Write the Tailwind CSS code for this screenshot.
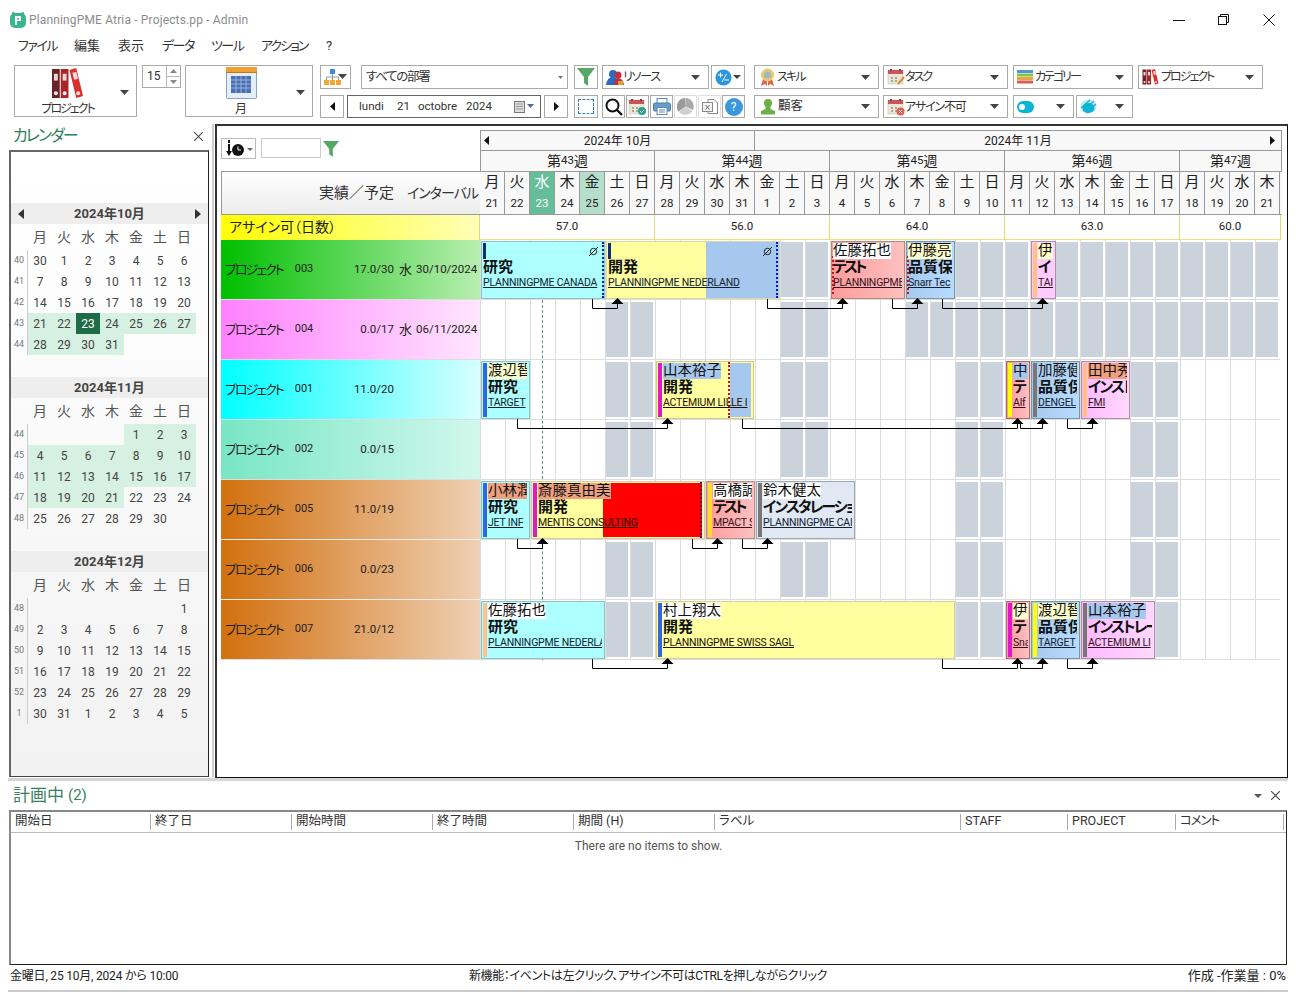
<!DOCTYPE html>
<html lang="ja">
<head>
<meta charset="utf-8">
<script src="https://cdn.jsdelivr.net/npm/@tailwindcss/browser@4"></script>
<title>PlanningPME Atria</title>
</head>
<body class="bg-white">
<svg width="0" height="0" class="absolute">
  <defs>
    <path id="arr" d="M-6 6L0 0L6 6Z" fill="#000"/>
    <g id="binders">
      <rect x="0" y="1" width="8" height="30" fill="#6b2226"/><rect x="9" y="1" width="8" height="30" fill="#ab2628"/>
      <path d="M18 2L25 0L32 29L25 31Z" fill="#d8302e"/>
      <rect x="2" y="6" width="4" height="7" fill="#e8d8d8"/><rect x="11" y="6" width="4" height="7" fill="#f0d8d8"/><path d="M21 5L25 4L27 11L23 12Z" fill="#f4dede"/>
      <circle cx="4" cy="26" r="2" fill="#eee"/><circle cx="13" cy="26" r="2" fill="#eee"/><circle cx="27" cy="26" r="2" fill="#f4dede"/>
    </g>
    <g id="calsm">
      <rect x="1" y="2" width="15" height="14" fill="#e9e6d8" stroke="#c9c6b8" stroke-width=".6"/>
      <rect x="1" y="2" width="15" height="4" fill="#c9555a"/>
      <rect x="3" y="1" width="2" height="2" fill="#555"/><rect x="12" y="1" width="2" height="2" fill="#555"/>
      <rect x="4" y="9" width="2" height="2" fill="#a8a590"/><rect x="8" y="9" width="2" height="2" fill="#a8a590"/><rect x="4" y="12" width="2" height="2" fill="#a8a590"/><rect x="8" y="12" width="2" height="2" fill="#a8a590"/>
    </g>
    <path id="caret" d="M0 0H9L4.5 5Z" fill="#444"/>
    <path id="funnel" d="M0 0H18L11 9V18L7 15V9Z" fill="#55a868"/>
  </defs>
</svg>
<div class="relative w-[1296px] h-[992px] overflow-hidden bg-white flex flex-col text-[#222] font-['Roboto','Noto_Sans_CJK_JP',sans-serif] [font-feature-settings:'palt']">

  <!-- title bar -->
  <div class="h-[36px] flex items-center shrink-0 pl-[10px] pt-[3px]">
    <svg width="16" height="17" viewBox="0 0 16 17"><circle cx="3.5" cy="2.5" r="1.5" fill="#2f9e78"/><circle cx="12.5" cy="2.5" r="1.5" fill="#2f9e78"/><rect x="0" y="2" width="16" height="15" rx="5" fill="#3bb58d"/><path d="M5 5H11V10H7V14H5Z M7 7V8.4H9V7Z" fill="#fff" fill-rule="evenodd"/></svg>
    <span class="ml-[3px] text-[12px] text-[#8c8c8c] tracking-[0.15px]">PlanningPME Atria - Projects.pp - Admin</span>
    <div class="ml-auto flex items-center gap-[33px] pr-[21px]">
      <svg width="12" height="12" viewBox="0 0 12 12"><path d="M0 6.5H12" stroke="#111"/></svg>
      <svg width="12" height="12" viewBox="0 0 12 12" fill="none" stroke="#111"><path d="M2.5 2.5V.5H10.5V8.5H8.5"/><rect x=".5" y="2.5" width="8" height="8" fill="#fff"/></svg>
      <svg width="12" height="12" viewBox="0 0 12 12" stroke="#111"><path d="M.5 .5L11.5 11.5M11.5 .5L.5 11.5"/></svg>
    </div>
  </div>

  <!-- menu -->
  <div class="h-[20px] shrink-0 flex items-center pl-[18px] text-[13px] text-[#333]">
    <span class="w-[56px] tracking-[-1.5px]">ファイル</span><span class="w-[44px]">編集</span><span class="w-[44px]">表示</span><span class="w-[49px] tracking-[-1.5px]">データ</span><span class="w-[50px] tracking-[-1.5px]">ツール</span><span class="w-[65px] tracking-[-2px]">アクション</span><span>?</span>
  </div>

  <!-- toolbar -->
  <div class="h-[64px] shrink-0 pt-[9px] pl-[14px] flex items-start text-[12px] text-[#333]">
    <div class="relative w-[123px] h-[52px] border border-[#aaa] flex flex-col items-center">
      <svg class="mt-[2px] mr-[16px]" width="33" height="32" viewBox="0 0 32 32"><use href="#binders"/></svg>
      <span class="mr-[16px] leading-[14px] mt-[3px] tracking-[-2px]">プロジェクト</span>
      <svg class="absolute right-[7px] top-[24px]" width="9" height="5"><use href="#caret"/></svg>
    </div>
    <div class="ml-[5px] w-[39px] h-[23px] border border-[#aaa] flex">
      <span class="w-[23px] pl-[4px] leading-[21px] text-[12px]">15</span>
      <div class="flex-1 border-l border-[#bbb] flex flex-col">
        <div class="h-[11px] border-b border-[#bbb] flex items-center justify-center"><svg width="7" height="4"><path d="M0 4H7L3.5 0Z" fill="#888"/></svg></div>
        <div class="flex-1 flex items-center justify-center"><svg width="7" height="4"><path d="M0 0H7L3.5 4Z" fill="#888"/></svg></div>
      </div>
    </div>
    <div class="relative ml-[4px] w-[128px] h-[52px] border border-[#aaa] flex flex-col items-center">
      <svg class="mr-[16px] mt-[1px]" width="31" height="32" viewBox="0 0 31 32"><rect x=".5" y=".5" width="30" height="31" rx="1" fill="#e4eef8" stroke="#7fa8c8"/><rect x="0" y="0" width="31" height="5" fill="#f0a030"/><rect x="0" y="5" width="31" height="1" fill="#c07820"/><rect x="5" y="9" width="20" height="17" fill="#4a6fb5"/><path d="M5 13H25M5 17H25M5 21H25M10 9V26M15 9V26M20 9V26" stroke="#b8cbe6" stroke-width=".7"/></svg>
      <span class="mr-[16px] leading-[14px] mt-[3px]">月</span>
      <svg class="absolute right-[7px] top-[24px]" width="9" height="5"><use href="#caret"/></svg>
    </div>
    <!-- dept / date -->
    <div class="ml-[7px] w-[248px] flex flex-col gap-[6px]">
      <div class="flex h-[24px]">
        <div class="w-[31px] border border-[#aaa] flex items-center justify-center">
          <svg width="24" height="17" viewBox="0 0 24 17"><rect x="6" y="0" width="5" height="5" fill="#3b8fd8"/><path d="M8.5 5V8M2.5 11V8H14.5V11M8.5 8V11" stroke="#999" fill="none"/><rect x="0" y="11" width="5" height="5" fill="#f0a830"/><rect x="6" y="11" width="5" height="5" fill="#f0a830"/><rect x="12" y="11" width="5" height="5" fill="#f0a830"/><path d="M14 5H23L18.5 10Z" fill="#444"/></svg>
        </div>
        <div class="ml-[10px] w-[207px] border border-[#aaa] flex items-center pl-[4px] text-[12.5px] tracking-[-1.3px]">すべての部署<svg class="ml-auto mr-[4px]" width="5" height="3"><path d="M0 0H5L2.5 3Z" fill="#777"/></svg></div>
      </div>
      <div class="flex h-[23px]">
        <div class="w-[24px] border border-[#aaa] flex items-center justify-center"><svg width="5" height="9"><path d="M5 0V9L0 4.5Z" fill="#111"/></svg></div>
        <div class="ml-[3px] w-[194px] border border-[#666] flex items-center text-[11.5px] pl-[11px]">
          <span class="w-[38px]">lundi</span><span class="w-[21px]">21</span><span class="w-[48px]">octobre</span><span class="w-[48px]">2024</span>
          <svg width="21" height="12" viewBox="0 0 21 12"><rect x=".5" y=".5" width="10" height="11" fill="#ddd" stroke="#777"/><path d="M2 3H9M2 5.5H9M2 8H9" stroke="#999"/><path d="M13 3H20L16.5 7Z" fill="#4a6a9a"/></svg>
        </div>
        <div class="ml-[3px] w-[24px] border border-[#aaa] flex items-center justify-center"><svg width="5" height="9"><path d="M0 0V9L5 4.5Z" fill="#111"/></svg></div>
      </div>
    </div>
    <div class="ml-[6px] w-[24px] flex flex-col gap-[6px]">
      <div class="h-[24px] border border-[#aaa] flex items-center justify-center"><svg width="18" height="18"><use href="#funnel"/></svg></div>
      <div class="h-[23px] border border-[#aaa] flex items-center justify-center"><div class="w-[16px] h-[15px] border border-dashed border-[#3a7fc0]"></div></div>
    </div>
    <!-- resource -->
    <div class="ml-[4px] w-[143px] flex flex-col gap-[6px]">
      <div class="flex h-[24px]">
        <div class="w-[107px] border border-[#aaa] flex items-center pl-[3px]">
          <svg width="19" height="17" viewBox="0 0 19 17"><circle cx="7" cy="5" r="4" fill="#2a6cc0"/><path d="M0 16Q1 8 7 8Q13 8 14 16Z" fill="#2a6cc0"/><circle cx="12" cy="6" r="3.5" fill="#c03040"/><path d="M8 16Q9 9 12 9Q17 9 18 16Z" fill="#c03040"/><rect x="12" y="12" width="5" height="4" fill="#e0a030"/></svg>
          <span class="ml-[-2px] tracking-[-1.2px]">リソース</span>
          <svg class="ml-auto mr-[8px]" width="9" height="5"><use href="#caret"/></svg>
        </div>
        <div class="ml-[2px] w-[34px] border border-[#aaa] flex items-center pl-[3px]">
          <svg width="27" height="17" viewBox="0 0 27 17"><circle cx="8.5" cy="8.5" r="8" fill="#2a95e0"/><path d="M3 6H8M5.5 3.5V8.5M7 13L11.5 5M9.5 11H14" stroke="#fff" fill="none"/><path d="M18 6H26L22 10Z" fill="#444"/></svg>
        </div>
      </div>
      <div class="flex h-[23px] justify-between">
        <div class="w-[23px] border border-[#aaa] flex items-center justify-center"><svg width="18" height="18" viewBox="0 0 18 18" fill="none" stroke="#111" stroke-width="2"><circle cx="7.5" cy="7.5" r="6"/><path d="M12 12L17 17" stroke-width="2.4"/></svg></div>
        <div class="w-[23px] border border-[#aaa] flex items-center justify-center"><svg width="19" height="18" viewBox="0 0 19 18"><use href="#calsm"/><circle cx="14" cy="13" r="4" fill="#2aa090"/><path d="M12 13L13.5 14.5L16 12" stroke="#fff" fill="none"/></svg></div>
        <div class="w-[23px] border border-[#aaa] flex items-center justify-center"><svg width="18" height="17" viewBox="0 0 18 17"><rect x="4" y="0.5" width="10" height="5" fill="#fff" stroke="#5a8ab8"/><rect x=".5" y="5" width="17" height="8" rx="1.5" fill="#6a9ccb" stroke="#4a7aa8"/><rect x="4" y="9.5" width="10" height="7" fill="#fff" stroke="#5a8ab8"/><path d="M6 12H12M6 14H12" stroke="#5a8ab8"/></svg></div>
        <div class="w-[23px] border border-[#ddd] flex items-center justify-center"><svg width="17" height="17" viewBox="0 0 17 17"><path d="M8.5 8.5V0A8.5 8.5 0 0 1 16 12Z" fill="#aaa"/><path d="M8.5 8.5L15.5 13A8.5 8.5 0 0 1 2 14Z" fill="#d0d0d0"/><path d="M8.5 8.5L1.5 13.5A8.5 8.5 0 0 1 8 0Z" fill="#999"/></svg></div>
        <div class="w-[23px] border border-[#ddd] flex items-center justify-center"><svg width="18" height="17" viewBox="0 0 18 17" fill="#fff" stroke="#888"><path d="M7 1.5H13L16.5 5V15.5H7Z"/><rect x="1.5" y="4.5" width="10" height="9" fill="#f2f2f2"/><path d="M4.5 7L8.5 11.5M8.5 7L4.5 11.5" stroke="#666"/></svg></div>
        <div class="w-[23px] border border-[#aaa] flex items-center justify-center"><div class="w-[18px] h-[18px] rounded-full bg-[#3c97d8] text-white text-[12px] leading-[18px] text-center">?</div></div>
      </div>
    </div>
    <!-- skill -->
    <div class="ml-[9px] w-[125px] flex flex-col gap-[6px]">
      <div class="h-[24px] border border-[#aaa] flex items-center pl-[5px]">
        <svg width="15" height="19" viewBox="0 0 15 19"><path d="M3 11L1 18L5 16L7 18V11M12 11L14 18L10 16L8 18V11Z" fill="#d8664a"/><circle cx="7.5" cy="7" r="6.5" fill="#e8c870"/><circle cx="7.5" cy="7" r="3.5" fill="#9ab8c8"/></svg>
        <span class="ml-[2px] tracking-[-1.8px]">スキル</span><svg class="ml-auto mr-[8px]" width="9" height="5"><use href="#caret"/></svg>
      </div>
      <div class="h-[23px] border border-[#aaa] flex items-center pl-[5px] text-[12.5px]">
        <svg width="16" height="17" viewBox="0 0 16 17"><circle cx="8" cy="5" r="4" fill="#6cae4a"/><path d="M5.5 8V11L1 13V16.5H15V13L10.5 11V8Z" fill="#6cae4a"/></svg>
        <span class="ml-[2px]">顧客</span><svg class="ml-auto mr-[8px]" width="9" height="5"><use href="#caret"/></svg>
      </div>
    </div>
    <!-- task -->
    <div class="ml-[4px] w-[125px] flex flex-col gap-[6px]">
      <div class="h-[24px] border border-[#aaa] flex items-center pl-[3px]">
        <svg width="18" height="18" viewBox="0 0 18 18"><use href="#calsm"/><path d="M11 16L17 9" stroke="#e08a2a" stroke-width="2"/></svg>
        <span class="tracking-[-2px]">タスク</span><svg class="ml-auto mr-[8px]" width="9" height="5"><use href="#caret"/></svg>
      </div>
      <div class="h-[23px] border border-[#aaa] flex items-center pl-[3px]">
        <svg width="18" height="18" viewBox="0 0 18 18"><use href="#calsm"/><circle cx="13.5" cy="13.5" r="4" fill="#e06050"/><path d="M12 12L15 15M15 12L12 15" stroke="#fff"/></svg>
        <span class="tracking-[-1.2px]">アサイン不可</span><svg class="ml-auto mr-[8px]" width="9" height="5"><use href="#caret"/></svg>
      </div>
    </div>
    <!-- category -->
    <div class="ml-[5px] w-[120px] flex flex-col gap-[6px]">
      <div class="h-[24px] border border-[#aaa] flex items-center pl-[3px]">
        <svg width="16" height="14" viewBox="0 0 16 14"><rect width="16" height="3" fill="#4a9ad0"/><rect y="3.5" width="16" height="3" fill="#8cc04a"/><rect y="7" width="16" height="3" fill="#e0a840"/><rect y="10.5" width="16" height="3" fill="#d8604a"/></svg>
        <span class="ml-[2px] tracking-[-2px]">カテゴリー</span><svg class="ml-auto mr-[8px]" width="9" height="5"><use href="#caret"/></svg>
      </div>
      <div class="flex h-[23px] justify-between">
        <div class="w-[61px] border border-[#aaa] flex items-center pl-[3px]"><div class="w-[17px] h-[12px] rounded-full bg-[#0ab4d4] flex items-center pl-[2px]"><div class="w-[6px] h-[6px] rounded-full bg-white"></div></div><svg class="ml-auto mr-[8px]" width="9" height="5"><use href="#caret"/></svg></div>
        <div class="w-[57px] border border-[#aaa] flex items-center pl-[3px]"><svg width="17" height="15" viewBox="0 0 17 15"><ellipse cx="8.5" cy="7.5" rx="8" ry="7" fill="#bfe6ee"/><ellipse cx="8.5" cy="9" rx="6" ry="5" fill="#0ab4d4"/><path d="M1 9L10 1M3 12L14 2M6 14L16 5" stroke="#0ab4d4" stroke-width="1.2"/></svg><svg class="ml-auto mr-[8px]" width="9" height="5"><use href="#caret"/></svg></div>
      </div>
    </div>
    <div class="ml-[5px] w-[125px] h-[24px] border border-[#aaa] flex items-center pl-[3px]">
      <svg width="17" height="16" viewBox="0 0 32 32"><use href="#binders"/></svg>
      <span class="ml-[2px] tracking-[-2px]">プロジェクト</span><svg class="ml-auto mr-[8px]" width="9" height="5"><use href="#caret"/></svg>
    </div>
  </div>

  <!-- main -->
  <div class="h-[658px] shrink-0 flex">
    <!-- calendar panel -->
    <div class="w-[210px] shrink-0 pl-[9px] flex flex-col">
      <div class="h-[30px] flex items-center pl-[4px] pr-[7px] pt-[2px]">
        <span class="text-[16px] text-[#2e7d5b] tracking-[-2px]">カレンダー</span>
        <svg class="ml-auto" width="9" height="9" stroke="#555"><path d="M0 0L9 9M9 0L0 9" stroke-width="1.2"/></svg>
      </div>
      <div class="h-[627px] w-[200px] border-l-2 border-t-2 border-[#666] border-r border-r-[#222] border-b border-b-[#444] pt-[51px] bg-[linear-gradient(to_bottom,#ffffff,#fcfcfc_30%,#f2f2f2)] text-[#444]">
        <!-- Oct -->
        <div class="h-[21px] bg-[#eeeeee] flex items-center justify-between px-[7px] text-[13px] font-bold text-[#444] w-[197px]">
          <svg width="6" height="10"><path d="M6 0V10L0 5Z" fill="#333"/></svg><span>2024年10月</span><svg width="6" height="10"><path d="M0 0V10L6 5Z" fill="#333"/></svg>
        </div>
        <div class="h-[26px] grid grid-cols-[17px_repeat(7,24px)] items-center text-center text-[14px] text-[#555]"><span></span><span>月</span><span>火</span><span>水</span><span>木</span><span>金</span><span>土</span><span>日</span></div>
        <div class="grid grid-cols-[17px_repeat(7,24px)] auto-rows-[21px] text-[12px] [&>*]:flex [&>*]:items-center [&>*]:justify-center">
          <b class="font-normal text-[9px] text-[#777] border-r border-[#ccc]">40</b><span>30</span><span>1</span><span>2</span><span>3</span><span>4</span><span>5</span><span>6</span>
          <b class="font-normal text-[9px] text-[#777] border-r border-[#ccc]">41</b><span>7</span><span>8</span><span>9</span><span>10</span><span>11</span><span>12</span><span>13</span>
          <b class="font-normal text-[9px] text-[#777] border-r border-[#ccc]">42</b><span>14</span><span>15</span><span>16</span><span>17</span><span>18</span><span>19</span><span>20</span>
          <b class="font-normal text-[9px] text-[#777] border-r border-[#ccc]">43</b><span class="bg-[#d6f0e2]">21</span><span class="bg-[#d6f0e2]">22</span><span class="bg-[#1e6b47] text-white">23</span><span class="bg-[#d6f0e2]">24</span><span class="bg-[#d6f0e2]">25</span><span class="bg-[#d6f0e2]">26</span><span class="bg-[#d6f0e2]">27</span>
          <b class="font-normal text-[9px] text-[#777] border-r border-[#ccc]">44</b><span class="bg-[#d6f0e2]">28</span><span class="bg-[#d6f0e2]">29</span><span class="bg-[#d6f0e2]">30</span><span class="bg-[#d6f0e2]">31</span>
        </div>
        <!-- Nov -->
        <div class="mt-[22px] h-[21px] bg-[#eeeeee] flex items-center justify-center text-[13px] font-bold text-[#444] w-[197px]">2024年11月</div>
        <div class="h-[26px] grid grid-cols-[17px_repeat(7,24px)] items-center text-center text-[14px] text-[#555]"><span></span><span>月</span><span>火</span><span>水</span><span>木</span><span>金</span><span>土</span><span>日</span></div>
        <div class="grid grid-cols-[17px_repeat(7,24px)] auto-rows-[21px] text-[12px] [&>*]:flex [&>*]:items-center [&>*]:justify-center">
          <b class="font-normal text-[9px] text-[#777] border-r border-[#ccc]">44</b><span></span><span></span><span></span><span></span><span class="bg-[#d6f0e2]">1</span><span class="bg-[#d6f0e2]">2</span><span class="bg-[#d6f0e2]">3</span>
          <b class="font-normal text-[9px] text-[#777] border-r border-[#ccc]">45</b><span class="bg-[#d6f0e2]">4</span><span class="bg-[#d6f0e2]">5</span><span class="bg-[#d6f0e2]">6</span><span class="bg-[#d6f0e2]">7</span><span class="bg-[#d6f0e2]">8</span><span class="bg-[#d6f0e2]">9</span><span class="bg-[#d6f0e2]">10</span>
          <b class="font-normal text-[9px] text-[#777] border-r border-[#ccc]">46</b><span class="bg-[#d6f0e2]">11</span><span class="bg-[#d6f0e2]">12</span><span class="bg-[#d6f0e2]">13</span><span class="bg-[#d6f0e2]">14</span><span class="bg-[#d6f0e2]">15</span><span class="bg-[#d6f0e2]">16</span><span class="bg-[#d6f0e2]">17</span>
          <b class="font-normal text-[9px] text-[#777] border-r border-[#ccc]">47</b><span class="bg-[#d6f0e2]">18</span><span class="bg-[#d6f0e2]">19</span><span class="bg-[#d6f0e2]">20</span><span class="bg-[#d6f0e2]">21</span><span>22</span><span>23</span><span>24</span>
          <b class="font-normal text-[9px] text-[#777] border-r border-[#ccc]">48</b><span>25</span><span>26</span><span>27</span><span>28</span><span>29</span><span>30</span>
        </div>
        <!-- Dec -->
        <div class="mt-[22px] h-[21px] bg-[#eeeeee] flex items-center justify-center text-[13px] font-bold text-[#444] w-[197px]">2024年12月</div>
        <div class="h-[26px] grid grid-cols-[17px_repeat(7,24px)] items-center text-center text-[14px] text-[#555]"><span></span><span>月</span><span>火</span><span>水</span><span>木</span><span>金</span><span>土</span><span>日</span></div>
        <div class="grid grid-cols-[17px_repeat(7,24px)] auto-rows-[21px] text-[12px] [&>*]:flex [&>*]:items-center [&>*]:justify-center">
          <b class="font-normal text-[9px] text-[#777] border-r border-[#ccc]">48</b><span></span><span></span><span></span><span></span><span></span><span></span><span>1</span>
          <b class="font-normal text-[9px] text-[#777] border-r border-[#ccc]">49</b><span>2</span><span>3</span><span>4</span><span>5</span><span>6</span><span>7</span><span>8</span>
          <b class="font-normal text-[9px] text-[#777] border-r border-[#ccc]">50</b><span>9</span><span>10</span><span>11</span><span>12</span><span>13</span><span>14</span><span>15</span>
          <b class="font-normal text-[9px] text-[#777] border-r border-[#ccc]">51</b><span>16</span><span>17</span><span>18</span><span>19</span><span>20</span><span>21</span><span>22</span>
          <b class="font-normal text-[9px] text-[#777] border-r border-[#ccc]">52</b><span>23</span><span>24</span><span>25</span><span>26</span><span>27</span><span>28</span><span>29</span>
          <b class="font-normal text-[9px] text-[#777] border-r border-[#ccc]">1</b><span>30</span><span>31</span><span>1</span><span>2</span><span>3</span><span>4</span><span>5</span>
        </div>
      </div>
    </div>
    <!-- splitter -->
    <div class="w-[5px] shrink-0 flex justify-center"><div class="w-[2px] mt-[4px] h-[653px] bg-[#cfcfcf]"></div></div>

    <!-- gantt panel -->
    <div class="mt-[4px] w-[1073px] h-[654px] border-l-2 border-t-2 border-[#333] border-r border-b border-r-[#111] border-b-[#111] pt-[4px] pl-[4px] overflow-hidden">
      <!-- header -->
      <div class="flex">
        <div class="w-[259px] shrink-0">
          <div class="h-[41px] pt-[8px] flex items-start">
            <div class="w-[35px] h-[21px] border border-[#bbb] flex items-center pl-[3px]">
              <svg width="28" height="17" viewBox="0 0 28 17"><rect x="3" y="0" width="2" height="3" fill="#111"/><rect x="3" y="4" width="2" height="8" fill="#111"/><path d="M1 11H7L4 16Z" fill="#111"/><circle cx="13" cy="10" r="6" fill="#111"/><path d="M13 6.5V10H16" stroke="#fff" fill="none"/><path d="M22 8H28L25 11Z" fill="#666"/></svg>
            </div>
            <div class="ml-[5px] w-[60px] h-[20px] border border-[#ccc] bg-white"></div>
            <svg class="ml-[2px] mt-[3px]" width="16" height="16" viewBox="0 0 18 18"><use href="#funnel"/></svg>
          </div>
          <div class="h-[44px] border border-[#999] border-r-0 bg-[linear-gradient(to_bottom,#ffffff,#ececec)] flex items-center justify-end pr-[2px] text-[14px] text-[#333] gap-[13px]"><span class="text-[15px] [font-feature-settings:normal]">実績／予定</span><span class="tracking-[-1px]">インターバル</span></div>
        </div>
        <div class="w-[802px] shrink-0">
          <div class="flex h-[20px] text-[12px] border-t border-[#999] bg-[#f8f8f8]">
            <div class="relative w-[275px] border-r border-l border-[#999] flex items-center justify-center">
              <svg class="absolute left-[3px] top-[5px]" width="5" height="9"><path d="M5 0V9L0 4.5Z" fill="#111"/></svg>2024年 10月</div>
            <div class="relative w-[527px] flex items-center justify-center border-r border-[#999]">2024年 11月
              <svg class="absolute right-[6px] top-[5px]" width="5" height="9"><path d="M0 0V9L5 4.5Z" fill="#111"/></svg></div>
          </div>
          <div class="flex h-[21px] text-[14px] border-t border-[#999] bg-[#f8f8f8] text-[#222] [&>div]:border-r [&>div]:border-[#999] [&>div]:flex [&>div]:items-center [&>div]:justify-center [&_b]:font-normal [&_b]:text-[11.5px]">
            <div class="w-[175px] border-l">第<b>43</b>週</div><div class="w-[175px]">第<b>44</b>週</div><div class="w-[175px]">第<b>45</b>週</div><div class="w-[175px]">第<b>46</b>週</div><div class="w-[102px]">第<b>47</b>週</div>
          </div>
          <div class="grid grid-cols-[repeat(32,25px)] w-[802px] border-t border-b border-[#999] bg-[#f8f8f8] text-[#222] [&>div]:flex [&>div]:flex-col [&>div]:items-center [&>div]:h-[42px] [&>div]:border-r [&>div]:border-[#999] [&>div]:text-[15px] [&>div]:leading-[21px] [&_b]:font-normal [&_b]:text-[11.5px] [&_b]:leading-[21px]">
            <div>月<b>21</b></div><div>火<b>22</b></div><div class="bg-[#66bd99] text-white">水<b>23</b></div><div>木<b>24</b></div><div class="bg-[#b5dfcb]">金<b>25</b></div><div>土<b>26</b></div><div>日<b>27</b></div>
            <div>月<b>28</b></div><div>火<b>29</b></div><div>水<b>30</b></div><div>木<b>31</b></div><div>金<b>1</b></div><div>土<b>2</b></div><div>日<b>3</b></div>
            <div>月<b>4</b></div><div>火<b>5</b></div><div>水<b>6</b></div><div>木<b>7</b></div><div>金<b>8</b></div><div>土<b>9</b></div><div>日<b>10</b></div>
            <div>月<b>11</b></div><div>火<b>12</b></div><div>水<b>13</b></div><div>木<b>14</b></div><div>金<b>15</b></div><div>土<b>16</b></div><div>日<b>17</b></div>
            <div>月<b>18</b></div><div>火<b>19</b></div><div>水<b>20</b></div><div>木<b>21</b></div>
          </div>
        </div>
      </div>

      <!-- yellow row -->
      <div class="flex h-[25px]">
        <div class="w-[259px] shrink-0 bg-[linear-gradient(to_right,#ffff00,#ffffb8)] flex items-center pl-[8px] text-[14px] text-[#222] border-r border-[#e0dc70]">アサイン可（日数）</div>
        <div class="w-[801px] shrink-0 flex text-[11.5px] border-b border-[#e6e27a] [&>div]:flex [&>div]:items-center [&>div]:justify-center [&>div]:border-r [&>div]:border-[#e0dc70]">
          <div class="w-[175px]">57.0</div><div class="w-[175px]">56.0</div><div class="w-[175px]">64.0</div><div class="w-[175px]">63.0</div><div class="w-[101px]">60.0</div>
        </div>
      </div>

      <!-- rows -->
      <div class="relative [&_.name]:tracking-[-2px] [&_.name]:mr-[12px] [&_.cl]:text-[10.5px] [&_.cl]:tracking-[-0.2px] [&_.lane]:relative [&_.lane]:w-[800px] [&_.lane]:h-[60px] [&_.lane]:border-b [&_.lane]:border-[#ddd] [&_.lane]:bg-[linear-gradient(to_right,#dddddd_1px,transparent_1px)] [&_.lane]:bg-[length:25px_100%] [&_i]:absolute [&_i]:top-[2px] [&_i]:h-[55px] [&_i]:w-[22px] [&_i]:bg-[#cad3db]">
        <div class="absolute z-[1] left-[321px] top-[60px] h-[360px] w-0 border-l border-dashed border-[#5a9a8a]"></div>

        <!-- 003 -->
        <div class="flex">
          <div class="w-[259px] h-[60px] shrink-0 bg-[linear-gradient(to_right,#00bf00,#b8eeb0)] border-b border-[#ddd] flex items-center text-[#222]">
            <span class="w-[173px] pl-[4px] text-[13px] flex items-center"><span class="name">プロジェクト</span><span class="mr-auto text-[11px]">003</span><span class="text-[11.5px]">17.0/30</span></span>
            <span class="ml-[5px] text-[13px]">水</span><span class="ml-[4px] text-[11.5px]">30/10/2024</span>
          </div>
          <div class="lane">
            <i class="left-[301px]"></i><i class="left-[326px]"></i><i class="left-[476px]"></i><i class="left-[501px]"></i><i class="left-[526px]"></i><i class="left-[576px]"></i><i class="left-[601px]"></i><i class="left-[626px]"></i><i class="left-[651px]"></i><i class="left-[676px]"></i><i class="left-[701px]"></i><i class="left-[726px]"></i><i class="left-[751px]"></i><i class="left-[776px]"></i>
            <div class="absolute z-10 top-[1px] left-[1px] w-[124px] h-[58px] border border-[#8cc4c4] bg-[#aeffff] overflow-hidden">
              <div class="absolute left-[1px] top-[1px] w-[3px] h-[16px] bg-[#12306e]"></div>
              <svg class="absolute right-[6px] top-[5px]" width="9" height="9" fill="none" stroke="#222"><circle cx="4.5" cy="4.5" r="3.2"/><path d="M0 9L9 0"/></svg>
              <div class="absolute right-0 top-0 bottom-0 w-0 border-l-2 border-dotted border-[#0022bb]"></div>
              <div class="absolute left-[1px] right-[4px] top-[1px] overflow-hidden whitespace-nowrap">
                <div class="h-[16px]"></div>
                <div class="text-[15px] font-bold leading-[16px] text-[#111]">研究</div>
                <div class="cl leading-[16px] underline text-[#123]">PLANNINGPME CANADA</div>
              </div>
            </div>
            <div class="absolute z-10 top-[1px] left-[126px] w-[174px] h-[58px] border border-[#d8d8a0] bg-[#ffff9f] overflow-hidden">
              <div class="absolute left-[99px] right-0 top-0 bottom-0 bg-[#a6c8ee]"></div>
              <div class="absolute left-[1px] top-[1px] w-[3px] h-[16px] bg-[#12306e]"></div>
              <svg class="absolute right-[7px] top-[5px]" width="9" height="9" fill="none" stroke="#222"><circle cx="4.5" cy="4.5" r="3.2"/><path d="M0 9L9 0"/></svg>
              <div class="absolute right-[1px] top-0 bottom-0 w-0 border-l-2 border-dotted border-[#0022bb]"></div>
              <div class="absolute left-[1px] right-[4px] top-[1px] overflow-hidden whitespace-nowrap">
                <div class="h-[16px]"></div>
                <div class="text-[15px] font-bold leading-[16px] text-[#111]">開発</div>
                <div class="cl leading-[16px] underline text-[#123]">PLANNINGPME NEDERLAND</div>
              </div>
            </div>
            <div class="absolute z-10 top-[1px] left-[351px] w-[74px] h-[58px] border border-[#b98a70] bg-[linear-gradient(to_right,#ff9c9c,#ffc0c0)] overflow-hidden">
              <div class="absolute left-0 top-[14px] bottom-[4px] w-0 border-l-2 border-dotted border-[#c01030]"></div>
              <div class="absolute left-[1px] right-[2px] top-[1px] overflow-hidden whitespace-nowrap">
                <div class="text-[14.5px] leading-[16px] w-fit bg-white text-[#111]">佐藤拓也</div>
                <div class="text-[15px] font-bold leading-[16px] text-[#111] tracking-[-3px]">テスト</div>
                <div class="cl leading-[16px] underline text-[#312]">PLANNINGPME</div>
              </div>
            </div>
            <div class="absolute z-10 top-[1px] left-[426px] w-[49px] h-[58px] border border-[#7898a8] bg-[linear-gradient(to_right,#a6c8ee,#b8dcff)] overflow-hidden">
              <div class="absolute left-0 top-[14px] bottom-[4px] w-0 border-l-2 border-dotted border-[#c01030]"></div>
              <div class="absolute left-[1px] right-[2px] top-[1px] overflow-hidden whitespace-nowrap">
                <div class="text-[14.5px] leading-[16px] w-fit bg-[#ffffcc] text-[#111]">伊藤亮</div>
                <div class="text-[15px] font-bold leading-[16px] text-[#111]">品質保</div>
                <div class="cl leading-[16px] underline text-[#123]">Snarr Tec</div>
              </div>
            </div>
            <div class="absolute z-10 top-[1px] left-[551px] w-[25px] h-[58px] border border-[#b090a8] bg-[#ffccff] overflow-hidden">
              <div class="absolute left-[1px] top-[1px] bottom-[1px] w-[4px] bg-[#ffc080]"></div>
              <div class="absolute left-[6px] right-0 top-[1px] overflow-hidden whitespace-nowrap">
                <div class="text-[14.5px] leading-[16px] w-fit bg-[#ffffcc] text-[#111]">伊</div>
                <div class="text-[15px] font-bold leading-[16px] text-[#111]">イ</div>
                <div class="cl leading-[16px] underline text-[#312]">TAI</div>
              </div>
            </div>
          </div>
        </div>

        <!-- 004 -->
        <div class="flex">
          <div class="w-[259px] h-[60px] shrink-0 bg-[linear-gradient(to_right,#ff80ff,#ffe6ff)] border-b border-[#ddd] flex items-center text-[#222]">
            <span class="w-[173px] pl-[4px] text-[13px] flex items-center"><span class="name">プロジェクト</span><span class="mr-auto text-[11px]">004</span><span class="text-[11.5px]">0.0/17</span></span>
            <span class="ml-[5px] text-[13px]">水</span><span class="ml-[4px] text-[11.5px]">06/11/2024</span>
          </div>
          <div class="lane">
            <i class="left-[126px]"></i><i class="left-[151px]"></i><i class="left-[301px]"></i><i class="left-[326px]"></i><i class="left-[426px]"></i><i class="left-[451px]"></i><i class="left-[476px]"></i><i class="left-[501px]"></i><i class="left-[526px]"></i><i class="left-[551px]"></i><i class="left-[576px]"></i><i class="left-[601px]"></i><i class="left-[626px]"></i><i class="left-[651px]"></i><i class="left-[676px]"></i><i class="left-[701px]"></i><i class="left-[726px]"></i><i class="left-[751px]"></i><i class="left-[776px]"></i>
          </div>
        </div>

        <!-- 001 -->
        <div class="flex">
          <div class="w-[259px] h-[60px] shrink-0 bg-[linear-gradient(to_right,#00ffff,#d8ffff)] border-b border-[#ddd] flex items-center text-[#222]">
            <span class="w-[173px] pl-[4px] text-[13px] flex items-center"><span class="name">プロジェクト</span><span class="mr-auto text-[11px]">001</span><span class="text-[11.5px]">11.0/20</span></span>
          </div>
          <div class="lane">
            <i class="left-[126px]"></i><i class="left-[151px]"></i><i class="left-[301px]"></i><i class="left-[326px]"></i><i class="left-[476px]"></i><i class="left-[501px]"></i><i class="left-[651px]"></i><i class="left-[676px]"></i>
            <div class="absolute z-10 top-[1px] left-[1px] w-[49px] h-[58px] border border-[#8cc4c4] bg-[#aeffff] overflow-hidden">
              <div class="absolute left-[1px] top-[1px] bottom-[1px] w-[4px] bg-[#3366dd]"></div>
              <div class="absolute left-[6px] right-[2px] top-[1px] overflow-hidden whitespace-nowrap">
                <div class="text-[14.5px] leading-[16px] w-fit bg-[#ffffcc] text-[#111]">渡辺智</div>
                <div class="text-[15px] font-bold leading-[16px] text-[#111]">研究</div>
                <div class="cl leading-[16px] underline text-[#123]">TARGET</div>
              </div>
            </div>
            <div class="absolute z-10 top-[1px] left-[176px] w-[98px] h-[58px] border border-[#d0c890] bg-[#ffff9f] overflow-hidden">
              <div class="absolute left-[73px] right-[2px] top-[1px] bottom-[1px] bg-[#a6c8ee]"></div>
              <div class="absolute left-[71px] top-0 bottom-0 w-0 border-l-2 border-dotted border-[#b01830]"></div>
              <div class="absolute left-[1px] top-[1px] bottom-[1px] w-[4px] bg-[#e018c8]"></div>
              <div class="absolute left-[6px] right-[2px] top-[1px] overflow-hidden whitespace-nowrap">
                <div class="text-[14.5px] leading-[16px] w-fit bg-[#a6c8ee] text-[#111]">山本裕子</div>
                <div class="text-[15px] font-bold leading-[16px] text-[#111]">開発</div>
                <div class="cl leading-[16px] underline text-[#210]">ACTEMIUM LILLE I</div>
              </div>
            </div>
            <div class="absolute z-10 top-[1px] left-[526px] w-[24px] h-[58px] border border-[#a86a5a] bg-[linear-gradient(to_right,#ff9c9c,#ffc0c0)] overflow-hidden">
              <div class="absolute left-[1px] top-[1px] bottom-[1px] w-[4px] bg-[#ffff00]"></div>
              <div class="absolute left-[6px] right-[1px] top-[1px] overflow-hidden whitespace-nowrap">
                <div class="text-[14.5px] leading-[16px] w-fit bg-[#a6c8ee] text-[#111]">中</div>
                <div class="text-[15px] font-bold leading-[16px] text-[#111]">テ</div>
                <div class="cl leading-[16px] underline text-[#312]">Alf</div>
              </div>
            </div>
            <div class="absolute z-10 top-[1px] left-[551px] w-[49px] h-[58px] border border-[#7898a8] bg-[linear-gradient(to_right,#a6c8ee,#b8dcff)] overflow-hidden">
              <div class="absolute left-[1px] top-[1px] bottom-[1px] w-[4px] bg-[#777]"></div>
              <div class="absolute left-[6px] right-[2px] top-[1px] overflow-hidden whitespace-nowrap">
                <div class="text-[14.5px] leading-[16px] w-fit text-[#111]">加藤健</div>
                <div class="text-[15px] font-bold leading-[16px] text-[#111]">品質保</div>
                <div class="cl leading-[16px] underline text-[#123]">DENGEL</div>
              </div>
            </div>
            <div class="absolute z-10 top-[1px] left-[601px] w-[49px] h-[58px] border border-[#b090a8] bg-[linear-gradient(to_right,#ffb8ff,#ffd8ff)] overflow-hidden">
              <div class="absolute left-[1px] top-[1px] bottom-[1px] w-[4px] bg-[#ffc080]"></div>
              <div class="absolute left-[6px] right-[2px] top-[1px] overflow-hidden whitespace-nowrap">
                <div class="text-[14.5px] leading-[16px] w-fit bg-[#eea080] text-[#111]">田中秀</div>
                <div class="text-[15px] font-bold leading-[16px] text-[#111] tracking-[-2px]">インスト</div>
                <div class="cl leading-[16px] underline text-[#312]">FMI</div>
              </div>
            </div>
          </div>
        </div>

        <!-- 002 -->
        <div class="flex">
          <div class="w-[259px] h-[60px] shrink-0 bg-[linear-gradient(to_right,#78e6c4,#d2f8ec)] border-b border-[#ddd] flex items-center text-[#222]">
            <span class="w-[173px] pl-[4px] text-[13px] flex items-center"><span class="name">プロジェクト</span><span class="mr-auto text-[11px]">002</span><span class="text-[11.5px]">0.0/15</span></span>
          </div>
          <div class="lane">
            <i class="left-[126px]"></i><i class="left-[151px]"></i><i class="left-[301px]"></i><i class="left-[326px]"></i><i class="left-[476px]"></i><i class="left-[501px]"></i><i class="left-[651px]"></i><i class="left-[676px]"></i>
          </div>
        </div>

        <!-- 005 -->
        <div class="flex">
          <div class="w-[259px] h-[60px] shrink-0 bg-[linear-gradient(to_right,#d2700e,#efd0b4)] border-b border-[#eee] flex items-center text-[#222]">
            <span class="w-[173px] pl-[4px] text-[13px] flex items-center"><span class="name">プロジェクト</span><span class="mr-auto text-[11px]">005</span><span class="text-[11.5px]">11.0/19</span></span>
          </div>
          <div class="lane">
            <i class="left-[476px]"></i><i class="left-[501px]"></i><i class="left-[651px]"></i><i class="left-[676px]"></i>
            <div class="absolute z-10 top-[1px] left-[1px] w-[49px] h-[58px] border border-[#8cc4c4] bg-[#aeffff] overflow-hidden">
              <div class="absolute left-[1px] top-[1px] bottom-[1px] w-[4px] bg-[#3366dd]"></div>
              <div class="absolute left-[6px] right-[2px] top-[1px] overflow-hidden whitespace-nowrap">
                <div class="text-[14.5px] leading-[16px] w-fit bg-[#eea080] text-[#111]">小林潤</div>
                <div class="text-[15px] font-bold leading-[16px] text-[#111]">研究</div>
                <div class="cl leading-[16px] underline text-[#123]">JET INF</div>
              </div>
            </div>
            <div class="absolute z-10 top-[1px] left-[51px] w-[174px] h-[58px] border border-[#d8c8a0] bg-[#ffff9f] overflow-hidden">
              <div class="absolute left-[71px] w-[99px] top-[1px] bottom-[1px] bg-[#ff0000]"></div>
              <div class="absolute right-[2px] top-0 bottom-0 w-0 border-l-2 border-dotted border-[#501080]"></div>
              <div class="absolute left-[1px] top-[1px] bottom-[1px] w-[4px] bg-[#e018c8]"></div>
              <div class="absolute left-[6px] right-[2px] top-[1px] overflow-hidden whitespace-nowrap">
                <div class="text-[14.5px] leading-[16px] w-fit bg-[#eea080] text-[#111]">斎藤真由美</div>
                <div class="text-[15px] font-bold leading-[16px] text-[#111]">開発</div>
                <div class="cl leading-[16px] underline text-[#210]">MENTIS CONSULTING</div>
              </div>
            </div>
            <div class="absolute z-10 top-[1px] left-[226px] w-[49px] h-[58px] border border-[#b09090] bg-[linear-gradient(to_right,#ff9c9c,#ffc0c0)] overflow-hidden">
              <div class="absolute left-[1px] top-[1px] bottom-[1px] w-[4px] bg-[#ffdd22]"></div>
              <div class="absolute left-[6px] right-[2px] top-[1px] overflow-hidden whitespace-nowrap">
                <div class="text-[14.5px] leading-[16px] w-fit bg-white text-[#111]">高橋誠</div>
                <div class="text-[15px] font-bold leading-[16px] text-[#111] tracking-[-3px]">テスト</div>
                <div class="cl leading-[16px] underline text-[#312]">MPACT S</div>
              </div>
            </div>
            <div class="absolute z-10 top-[1px] left-[276px] w-[99px] h-[58px] border border-[#a0a8b8] bg-[#e0e8f4] overflow-hidden">
              <div class="absolute left-[1px] top-[1px] bottom-[1px] w-[4px] bg-[#777]"></div>
              <div class="absolute left-[6px] right-[2px] top-[1px] overflow-hidden whitespace-nowrap">
                <div class="text-[14.5px] leading-[16px] w-fit bg-white text-[#111]">鈴木健太</div>
                <div class="text-[15px] font-bold leading-[16px] text-[#111] tracking-[-2px]">インスタレーション</div>
                <div class="cl leading-[16px] underline text-[#123]">PLANNINGPME CAI</div>
              </div>
            </div>
          </div>
        </div>

        <!-- 006 -->
        <div class="flex">
          <div class="w-[259px] h-[60px] shrink-0 bg-[linear-gradient(to_right,#d2700e,#efd0b4)] border-b border-[#eee] flex items-center text-[#222]">
            <span class="w-[173px] pl-[4px] text-[13px] flex items-center"><span class="name">プロジェクト</span><span class="mr-auto text-[11px]">006</span><span class="text-[11.5px]">0.0/23</span></span>
          </div>
          <div class="lane">
            <i class="left-[126px]"></i><i class="left-[151px]"></i><i class="left-[301px]"></i><i class="left-[326px]"></i><i class="left-[476px]"></i><i class="left-[501px]"></i><i class="left-[651px]"></i><i class="left-[676px]"></i>
          </div>
        </div>

        <!-- 007 -->
        <div class="flex">
          <div class="w-[259px] h-[60px] shrink-0 bg-[linear-gradient(to_right,#d2700e,#efd0b4)] border-b border-[#ddd] flex items-center text-[#222]">
            <span class="w-[173px] pl-[4px] text-[13px] flex items-center"><span class="name">プロジェクト</span><span class="mr-auto text-[11px]">007</span><span class="text-[11.5px]">21.0/12</span></span>
          </div>
          <div class="lane">
            <i class="left-[126px]"></i><i class="left-[151px]"></i><i class="left-[476px]"></i><i class="left-[501px]"></i><i class="left-[676px]"></i>
            <div class="absolute z-10 top-[1px] left-[1px] w-[124px] h-[58px] border border-[#8cc4c4] bg-[#aeffff] overflow-hidden">
              <div class="absolute left-[1px] top-[1px] bottom-[1px] w-[4px] bg-[#ffc090]"></div>
              <div class="absolute left-[6px] right-[2px] top-[1px] overflow-hidden whitespace-nowrap">
                <div class="text-[14.5px] leading-[16px] w-fit bg-white text-[#111]">佐藤拓也</div>
                <div class="text-[15px] font-bold leading-[16px] text-[#111]">研究</div>
                <div class="cl leading-[16px] underline text-[#123]">PLANNINGPME NEDERLAND</div>
              </div>
            </div>
            <div class="absolute z-10 top-[1px] left-[176px] w-[299px] h-[58px] border border-[#d0d0a0] bg-[#ffff9f] overflow-hidden">
              <div class="absolute left-[1px] top-[1px] bottom-[1px] w-[4px] bg-[#3366dd]"></div>
              <div class="absolute left-[6px] right-[2px] top-[1px] overflow-hidden whitespace-nowrap">
                <div class="text-[14.5px] leading-[16px] w-fit bg-white text-[#111]">村上翔太</div>
                <div class="text-[15px] font-bold leading-[16px] text-[#111]">開発</div>
                <div class="cl leading-[16px] underline text-[#210]">PLANNINGPME SWISS SAGL</div>
              </div>
            </div>
            <div class="absolute z-10 top-[1px] left-[526px] w-[24px] h-[58px] border border-[#a86a7a] bg-[linear-gradient(to_right,#ff9c9c,#ffc0c0)] overflow-hidden">
              <div class="absolute left-[1px] top-[1px] bottom-[1px] w-[4px] bg-[#e018c8]"></div>
              <div class="absolute left-[6px] right-[1px] top-[1px] overflow-hidden whitespace-nowrap">
                <div class="text-[14.5px] leading-[16px] w-fit bg-[#ffffcc] text-[#111]">伊</div>
                <div class="text-[15px] font-bold leading-[16px] text-[#111]">テ</div>
                <div class="cl leading-[16px] underline text-[#312]">Sna</div>
              </div>
            </div>
            <div class="absolute z-10 top-[1px] left-[551px] w-[49px] h-[58px] border border-[#7898a8] bg-[linear-gradient(to_right,#a6c8ee,#b8dcff)] overflow-hidden">
              <div class="absolute left-[1px] top-[1px] bottom-[1px] w-[4px] bg-[#ffff00]"></div>
              <div class="absolute left-[6px] right-[2px] top-[1px] overflow-hidden whitespace-nowrap">
                <div class="text-[14.5px] leading-[16px] w-fit bg-[#ffffcc] text-[#111]">渡辺智</div>
                <div class="text-[15px] font-bold leading-[16px] text-[#111]">品質保</div>
                <div class="cl leading-[16px] underline text-[#123]">TARGET</div>
              </div>
            </div>
            <div class="absolute z-10 top-[1px] left-[601px] w-[74px] h-[58px] border border-[#b090a8] bg-[linear-gradient(to_right,#ffb8ff,#ffd8ff)] overflow-hidden">
              <div class="absolute left-[1px] top-[1px] bottom-[1px] w-[4px] bg-[#777]"></div>
              <div class="absolute left-[6px] right-[2px] top-[1px] overflow-hidden whitespace-nowrap">
                <div class="text-[14.5px] leading-[16px] w-fit bg-[#a6c8ee] text-[#111]">山本裕子</div>
                <div class="text-[15px] font-bold leading-[16px] text-[#111] tracking-[-2px]">インストレーション</div>
                <div class="cl leading-[16px] underline text-[#312]">ACTEMIUM LI</div>
              </div>
            </div>
          </div>
        </div>

        <!-- connectors -->
        <svg class="absolute z-20 left-[259px] top-0 pointer-events-none" width="800" height="440" viewBox="0 0 800 440" fill="none" stroke="#000">
          <path d="M112.5 59V68.5H137.5V64M287.5 59V68.5H362.5V64M412.5 59V68.5H437.5V64M462.5 59V68.5H562.5V64"/>
          <path d="M37.5 179V188.5H187.5V184M262.5 179V188.5H537.5V184M540.5 184V188.5H562.5V184M587.5 179V188.5H612.5V184"/>
          <path d="M37.5 299V308.5H62.5V304M212.5 299V308.5H237.5V304M262.5 299V308.5H287.5V304"/>
          <path d="M112.5 419V428.5H187.5V424M462.5 419V428.5H537.5V424M540.5 424V428.5H562.5V424M587.5 419V428.5H612.5V424"/>
          <g stroke="none">
            <use href="#arr" x="137.5" y="58"/><use href="#arr" x="362.5" y="58"/><use href="#arr" x="437.5" y="58"/><use href="#arr" x="562.5" y="58"/>
            <use href="#arr" x="187.5" y="178"/><use href="#arr" x="537.5" y="178"/><use href="#arr" x="562.5" y="178"/><use href="#arr" x="612.5" y="178"/>
            <use href="#arr" x="62.5" y="298"/><use href="#arr" x="237.5" y="298"/><use href="#arr" x="287.5" y="298"/>
            <use href="#arr" x="187.5" y="418"/><use href="#arr" x="537.5" y="418"/><use href="#arr" x="562.5" y="418"/><use href="#arr" x="612.5" y="418"/>
          </g>
        </svg>
      </div>
    </div>
  </div>

  <!-- splitter -->
  <div class="h-[3px] shrink-0 bg-[#d6d6d6] ml-[8px] mr-[8px]"></div>

  <!-- bottom panel title -->
  <div class="h-[29px] shrink-0 flex items-center pl-[13px] pr-[16px]">
    <span class="text-[17px] text-[#3c8060]">計画中</span><span class="ml-[4px] text-[15px] text-[#3c8060]">(2)</span>
    <svg class="ml-auto" width="8" height="4"><path d="M0 0H8L4 4Z" fill="#555"/></svg>
    <svg class="ml-[9px]" width="9" height="9" stroke="#444"><path d="M0 0L9 9M9 0L0 9" stroke-width="1.1"/></svg>
  </div>

  <!-- table -->
  <div class="ml-[9px] w-[1278px] h-[155px] shrink-0 border border-[#222] border-t-2 border-t-[#888] border-l-2 border-l-[#888]">
    <div class="h-[21px] pb-[1px] flex items-center border-b border-[#bbb] text-[12.5px] text-[#333] [&>div]:h-[16px] [&>div]:flex [&>div]:items-center [&>div]:pl-[4px] [&>div]:border-r [&>div]:border-[#aaa]">
      <div class="w-[140px]">開始日</div><div class="w-[141px]">終了日</div><div class="w-[141px]">開始時間</div><div class="w-[141px]">終了時間</div><div class="w-[141px]">期間 (H)</div><div class="w-[246px]">ラベル</div><div class="w-[107px]">STAFF</div><div class="w-[108px]">PROJECT</div><div class="w-[108px] tracking-[-1.2px]">コメント</div>
    </div>
    <div class="text-center text-[12px] text-[#555] pt-[4px]">There are no items to show.</div>
  </div>

  <!-- status -->
  <div class="h-[22px] shrink-0 grid grid-cols-[1fr_auto_1fr] items-center px-[10px] text-[12px] text-[#222]">
    <span class="tracking-[-0.2px]">金曜日, 25 10月, 2024 から 10:00</span>
    <span class="tracking-[-0.35px]">新機能：イベントは左クリック、アサイン不可はCTRLを押しながらクリック</span>
    <span class="text-right text-[13px]">作成 -作業量 : 0%</span>
  </div>
  <div class="mt-[3px] h-[2px] shrink-0 bg-[#ccc] mx-[8px]"></div>
</div>
</body>
</html>
